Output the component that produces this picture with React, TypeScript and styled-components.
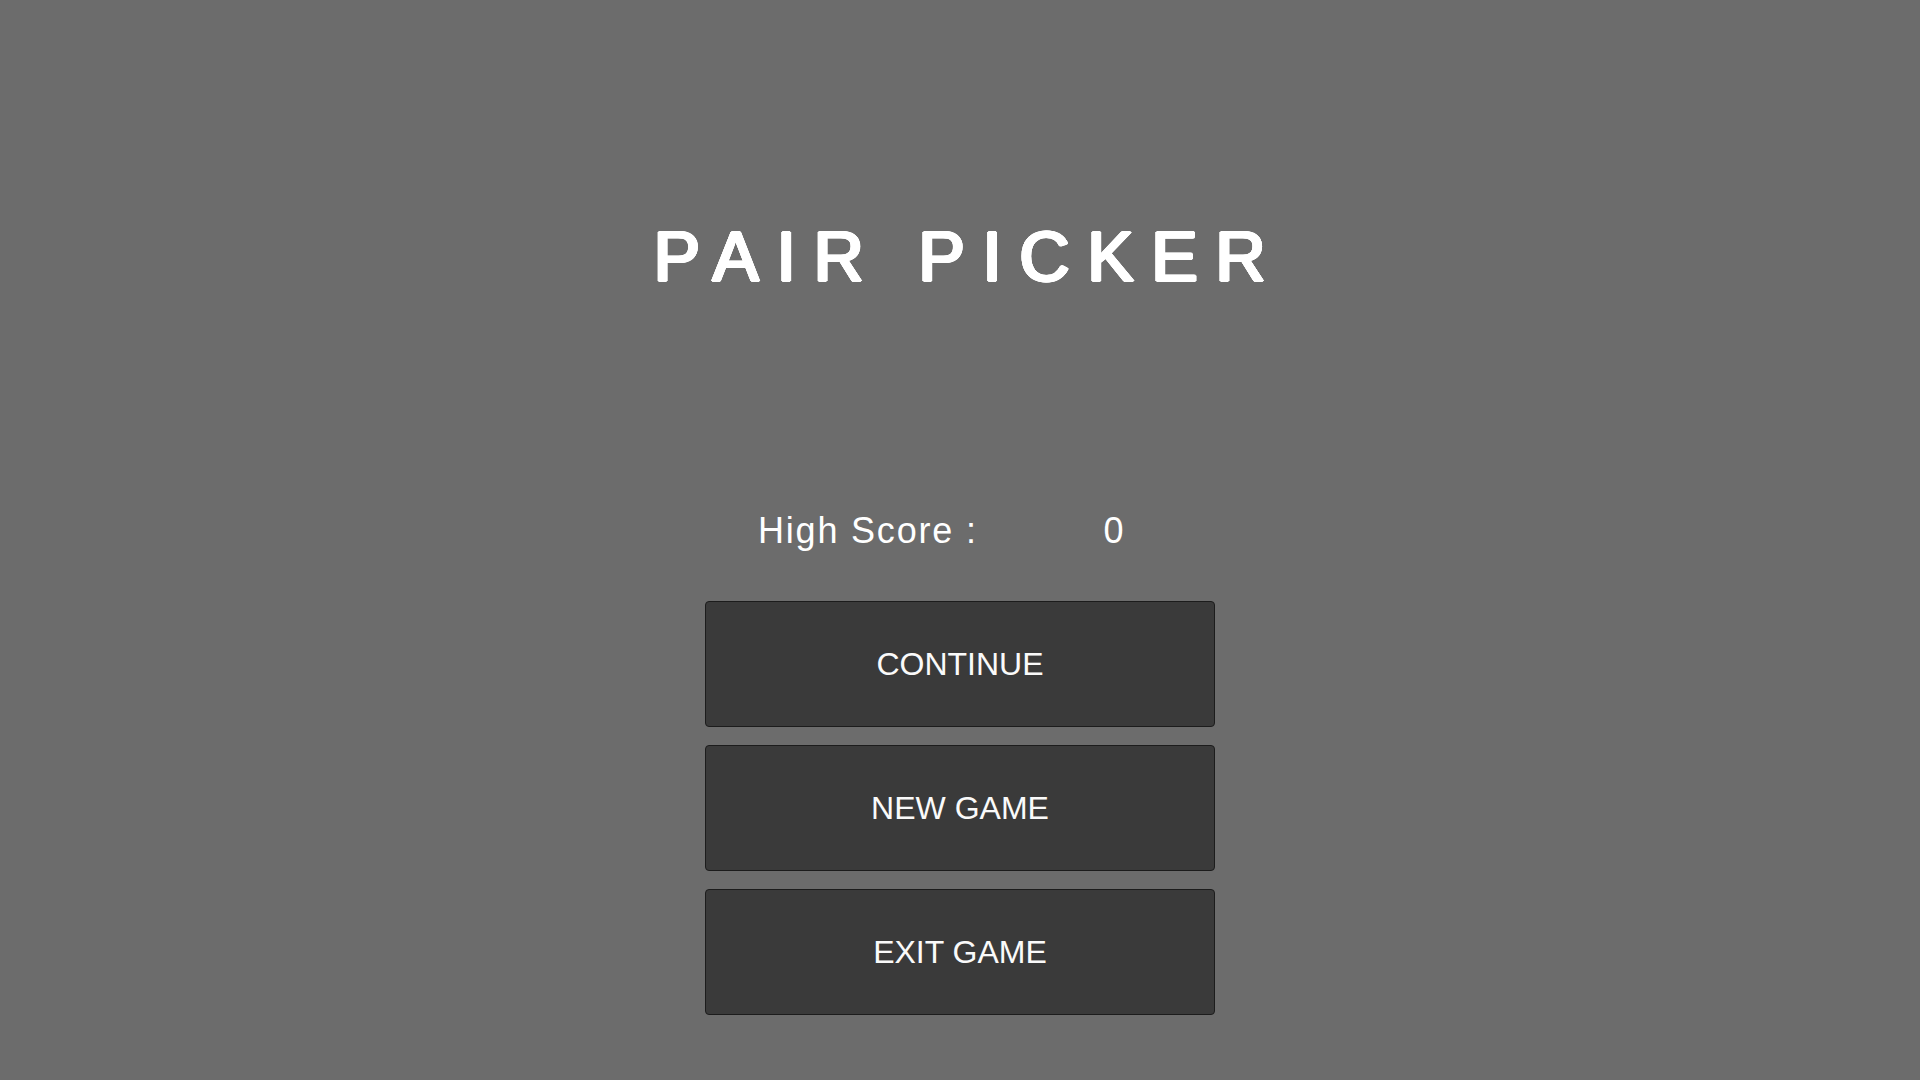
import React from 'react';
import styled, { createGlobalStyle } from 'styled-components';

const GlobalStyle = createGlobalStyle`
  *, *::before, *::after { box-sizing: border-box; }
  body { margin: 0; background: #6c6c6c; }
`;

const Screen = styled.main`
  width: 1920px;
  height: 1080px;
  overflow: hidden;
  display: flex;
  flex-direction: column;
  align-items: center;
  background: #6c6c6c;
  color: #fff;
  font-family: 'Liberation Sans', Arial, sans-serif;
`;

const outline = Array.from({ length: 12 }, (_, i) => {
  const a = (i / 12) * Math.PI * 2;
  return `${(Math.cos(a) * 1.6).toFixed(2)}px ${(Math.sin(a) * 0.7).toFixed(2)}px 0 #fff`;
}).join(', ');

const Title = styled.h1`
  margin: 217px 0 0;
  padding-left: 17px;
  height: 80px;
  line-height: 80px;
  font-size: 69.5px;
  font-weight: 400;
  letter-spacing: 17.7px;
  white-space: pre;
  text-shadow: ${outline};
`;

const Score = styled.div`
  width: 510px;
  margin-top: 209px;
  height: 50px;
  padding-left: 53px;
  display: flex;
  align-items: center;
  font-size: 36px;
  letter-spacing: 1.8px;
  white-space: pre;
`;

const ScoreLabel = styled.span`
  width: 345.5px;
`;

const Menu = styled.nav`
  margin-top: 45px;
  display: flex;
  flex-direction: column;
  gap: 18px;
`;

const MenuButton = styled.button`
  width: 510px;
  height: 126px;
  padding: 0;
  border: 1px solid #1c1c1c;
  border-radius: 4px;
  background: #3a3a3a;
  color: #fafafa;
  font: 400 32px 'Liberation Sans', Arial, sans-serif;
`;

export default function App() {
  return (
    <Screen>
      <GlobalStyle />
      <Title>PAIR PICKER</Title>
      <Score>
        <ScoreLabel>High Score :</ScoreLabel>
        <span>0</span>
      </Score>
      <Menu>
        <MenuButton>CONTINUE</MenuButton>
        <MenuButton>NEW GAME</MenuButton>
        <MenuButton>EXIT GAME</MenuButton>
      </Menu>
    </Screen>
  );
}
